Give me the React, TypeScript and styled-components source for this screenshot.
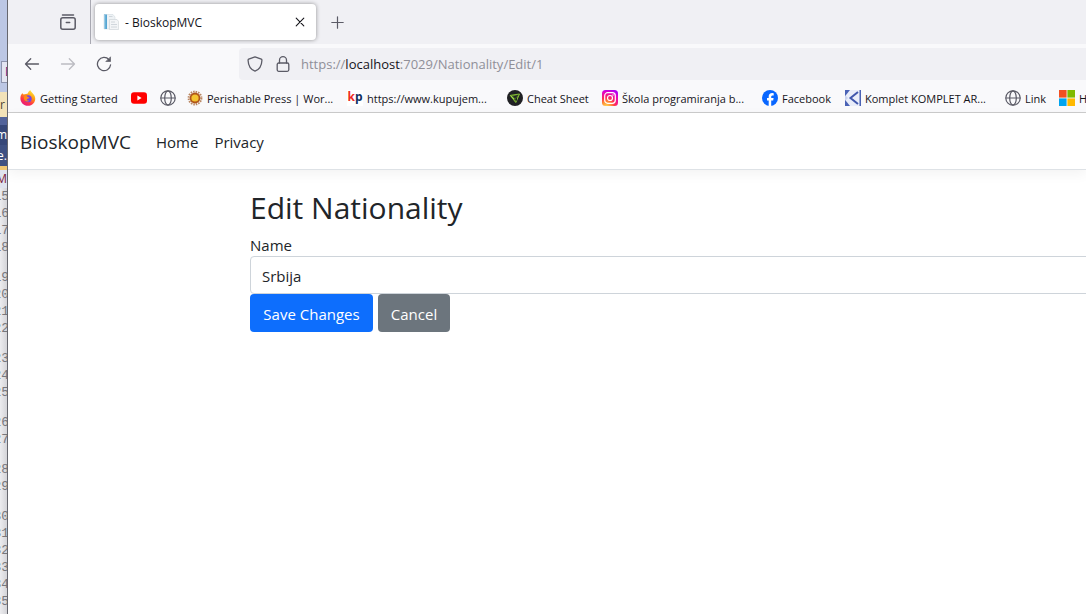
import React from "react";
import styled, { createGlobalStyle } from "styled-components";

const GlobalStyle = createGlobalStyle`
  *, *::before, *::after { box-sizing: border-box; }
  body {
    margin: 0;
    overflow: hidden;
    background: #fff;
    color: #212529;
    font-family: "Open Sans", "Noto Sans", sans-serif;
  }
  button, input { font: inherit; color: inherit; }
  button { border: 0; padding: 0; background: none; }
  a { color: inherit; text-decoration: none; }
  svg { display: block; flex: none; }
`;

const Desktop = styled.div`
  display: flex;
  height: 100vh;
  overflow: hidden;
`;

/* ---------- Editor window behind the browser ---------- */

const Editor = styled.aside`
  flex: none;
  width: 8px;
  overflow: hidden;
  background: linear-gradient(90deg, #ececef, #d4d4d8);
  border-right: 1px solid #66676e;
  font-size: 12px;
  line-height: 16px;
  white-space: pre;
`;

const EditorBand = styled.div<{ $h: number; $bg: string; $fg?: string; $start?: boolean }>`
  display: flex;
  align-items: center;
  justify-content: ${(p) => (p.$start ? "flex-start" : "flex-end")};
  height: ${(p) => p.$h}px;
  background: ${(p) => p.$bg};
  color: ${(p) => p.$fg ?? "#1e1e1e"};
`;

const EditorField = styled.div`
  height: 22px;
  margin-left: 1px;
  padding-left: 3px;
  border: 1px solid #8d94ad;
  border-right: 0;
  background: #e3e5f1;
  box-shadow: 0 0 0 10px #bcc7e4;
  color: #68217a;
  line-height: 20px;
`;

const LineNumber = styled.div<{ $wrapped?: boolean }>`
  display: flex;
  justify-content: flex-end;
  height: ${(p) => (p.$wrapped ? 30 : 17)}px;
  margin-right: -2px;
  color: #77777c;
  font: 13px/18px "Liberation Mono", monospace;
`;

/* ---------- Browser chrome ---------- */

const Browser = styled.div`
  display: flex;
  flex: 1;
  flex-direction: column;
  min-width: 0;
  overflow: hidden;
`;

const TabStrip = styled.div`
  display: flex;
  flex: none;
  align-items: center;
  height: 44px;
  background: #f0f0f4;
  color: #5b5b66;
`;

const RecentButton = styled.button`
  display: flex;
  align-items: center;
  justify-content: flex-end;
  width: 83px;
  height: 44px;
  padding-right: 14px;
  border-right: 1px solid #a9a9b2;
`;

const Tab = styled.div`
  display: flex;
  align-items: center;
  width: 221px;
  height: 36px;
  margin-left: 4px;
  padding: 0 11px 0 8px;
  border-radius: 4px;
  background: #fff;
  box-shadow: 0 0 4px rgba(0, 0, 0, 0.4);
  color: #15141a;
  font-size: 12px;
`;

const TabTitle = styled.span`
  flex: 1;
  padding-left: 6px;
`;

const NewTabButton = styled.button`
  margin-left: 15px;
`;

const Toolbar = styled.div`
  display: flex;
  flex: none;
  align-items: center;
  height: 40px;
  padding-left: 16px;
  background: #f9f9fb;
  color: #5b5b66;
`;

const NavButton = styled.button<{ $dim?: boolean }>`
  width: 36px;
  color: ${(p) => (p.$dim ? "#bcbcc2" : "#5b5b66")};
`;

const AddressBar = styled.div`
  display: flex;
  flex: 1;
  align-items: center;
  gap: 12px;
  height: 32px;
  margin-left: 107px;
  padding-left: 8px;
  border-radius: 4px 0 0 4px;
  background: #f0f0f4;
`;

const Url = styled.span`
  margin-left: -2px;
  color: #8f8f98;
  font-size: 13px;
  white-space: nowrap;

  b { color: #15141a; font-weight: 400; }
`;

const Bookmarks = styled.nav`
  display: flex;
  flex: none;
  align-items: center;
  height: 29px;
  padding-left: 12px;
  border-bottom: 1px solid #ccc;
  background: #f9f9fb;
  overflow: hidden;
`;

const Bookmark = styled.a<{ $w: number }>`
  display: flex;
  flex: none;
  align-items: center;
  gap: 4px;
  width: ${(p) => p.$w}px;
  color: #15141a;
  font-size: 11px;
  white-space: nowrap;
`;

/* ---------- Page ---------- */

const Navbar = styled.header`
  display: flex;
  flex: none;
  align-items: center;
  height: 57px;
  padding: 2px 0 0 12px;
  border-bottom: 1px solid #dee2e6;
  box-shadow: 0 4px 12px rgba(0, 0, 0, 0.05);
`;

const Brand = styled.a`
  margin-right: 17px;
  font-size: 19px;
`;

const NavLink = styled.a`
  padding: 8px;
  font-size: 15px;
`;

const Main = styled.main`
  padding: 19px 0 0 242px;
  font-size: 15px;
  line-height: 24px;
`;

const Title = styled.h1`
  margin: 0 0 7px;
  font-size: 30px;
  font-weight: 400;
  line-height: 38px;
`;

const Label = styled.label`
  display: block;
  line-height: 22px;
`;

const TextField = styled.input`
  display: block;
  width: calc(100% + 12px);
  height: 38px;
  padding: 2px 11px 0;
  border: 1px solid #ced4da;
  border-radius: 4px;
  background: #fff;
`;

const Actions = styled.div`
  display: flex;
  gap: 5px;
`;

const Button = styled.button<{ $bg: string; $w: number }>`
  width: ${(p) => p.$w}px;
  height: 38px;
  padding-top: 2px;
  border-radius: 4px;
  background: ${(p) => p.$bg};
  color: #fff;
`;

/* ---------- Icons ---------- */

const stroke = {
  fill: "none",
  stroke: "currentColor",
  strokeWidth: 1.3,
  strokeLinecap: "round" as const,
  strokeLinejoin: "round" as const,
};

const RecentIcon = () => (
  <svg width="16" height="16" viewBox="0 0 16 16" {...stroke} strokeWidth="1.5" aria-hidden>
    <path d="M2.5 1H13.5" />
    <rect x=".8" y="3.800" width="14.400" height="11.400" rx="2" />
    <path d="M6.300 8.500H9.700" />
  </svg>
);

const DocIcon = () => (
  <svg width="16" height="16" viewBox="0 0 16 16" aria-hidden>
    <path d="M1 .5H10L12 3V15H1Z" fill="#eef2f5" stroke="#d3dbe1" strokeWidth=".6" />
    <path d="M1 .5H4V15H1Z" fill="#56a5d2" />
    <path d="M1 .5H2.300V15H1Z" fill="#9bcbe5" />
    <path d="M6.500 5.500H14L15.600 7.500V15.500H6.500Z" fill="#f3f5f7" stroke="#d0d6da" strokeWidth=".7" />
    <path d="M8 8H12M8 10.500H14M8 13H14M6 2.500H9.500" stroke="#c6ced4" strokeWidth=".8" />
  </svg>
);

const CloseIcon = () => (
  <svg width="10" height="10" viewBox="0 0 10 10" {...stroke} strokeWidth="1.1" aria-hidden>
    <path d="M1.200 1.200 8.800 8.800M8.800 1.200 1.200 8.800" />
  </svg>
);

const PlusIcon = () => (
  <svg width="13" height="13" viewBox="0 0 13 13" {...stroke} strokeWidth="1.200" aria-hidden>
    <path d="M6.500 .8V12.200M.8 6.500H12.200" />
  </svg>
);

const ArrowIcon = ({ right = false }: { right?: boolean }) => (
  <svg width="16" height="16" viewBox="0 0 16 16" {...stroke} aria-hidden>
    <path d={right ? "M1.500 8H14.500M9.300 2.800 14.500 8 9.300 13.200" : "M14.500 8H1.500M6.700 2.800 1.500 8 6.700 13.200"} />
  </svg>
);

const ReloadIcon = () => (
  <svg width="16" height="16" viewBox="0 0 16 16" {...stroke} aria-hidden>
    <path d="M13 3.700A6.600 6.600 0 1 0 14.600 8.800" />
    <path d="M14.500 1.200V5.500H10.200Z" fill="currentColor" strokeWidth=".7" />
  </svg>
);

const ShieldIcon = () => (
  <svg width="16" height="16" viewBox="0 0 16 16" {...stroke} aria-hidden>
    <path d="M8 .8 14.300 3.200Q15 3.500 14.900 4.500C14.700 9.500 12.500 13.500 8 15.200C3.500 13.500 1.300 9.500 1.100 4.500Q1 3.500 1.700 3.200Z" />
  </svg>
);

const LockIcon = () => (
  <svg width="16" height="16" viewBox="0 0 16 16" {...stroke} aria-hidden>
    <rect x="2.200" y="7" width="11.600" height="8.300" rx="1.500" />
    <path d="M4.500 7V4.200A3.500 3.500 0 0 1 11.500 4.200V7" />
  </svg>
);

const FirefoxIcon = () => (
  <svg width="16" height="16" viewBox="0 0 16 16" aria-hidden>
    <defs>
      <linearGradient id="fx" x1=".8" y1="0" x2=".25" y2="1">
        <stop offset="0" stopColor="#fff044" />
        <stop offset=".4" stopColor="#ff980e" />
        <stop offset=".7" stopColor="#ff3647" />
        <stop offset="1" stopColor="#e31587" />
      </linearGradient>
    </defs>
    <path d="M2.300 3.200 3.600 4.500 6 4 7.800 3.600C8.200 2 9.200.8 10.300 0C10.500 2 14.700 4 15.200 8C15.600 12.500 12.200 15.800 8 15.800C3.700 15.800.4 12.600.4 8.500C.4 6 1.200 4.300 2.300 3.200Z" fill="url(#fx)" />
    <circle cx="8.200" cy="8.700" r="3.500" fill="#7542e5" />
    <path d="M4 6.300C5.500 5.300 7 5.900 7.800 7L9.500 7.400C9 8.700 7.600 8.300 7 9.200C6.500 10.200 7.600 11 9.200 10.400C8 12.500 4.500 11.500 4 9Z" fill="#ff8a16" />
  </svg>
);

const YouTubeIcon = () => (
  <svg width="16" height="16" viewBox="0 0 16 16" aria-hidden>
    <rect y="2.300" width="16" height="11.400" rx="3" fill="#f00" />
    <path d="M6.400 5.500 10.600 8 6.400 10.500Z" fill="#fff" />
  </svg>
);

const GlobeIcon = () => (
  <svg width="16" height="16" viewBox="0 0 16 16" {...stroke} stroke="#5b5b66" strokeWidth="1.200" aria-hidden>
    <circle cx="8" cy="8" r="7.200" />
    <ellipse cx="8" cy="8" rx="3.300" ry="7.200" />
    <path d="M1 8H15" />
  </svg>
);

const SunIcon = () => (
  <svg width="16" height="16" viewBox="0 0 16 16" aria-hidden>
    <circle cx="8" cy="8" r="6.400" fill="none" stroke="#b98660" strokeWidth="2" strokeDasharray="1.500 1" />
    <circle cx="8" cy="8" r="5.400" fill="#b0561a" />
    <circle cx="8" cy="8" r="3.600" fill="#f4c430" />
  </svg>
);

const KpMark = styled.span`
  display: flex;
  justify-content: center;
  width: 16px;
  height: 16px;
  background: #fff;
  color: #12305e;
  font: 700 12px/14px "Open Sans", sans-serif;

  i { color: #ee2a24; font-style: normal; }
`;

const CheatIcon = () => (
  <svg width="16" height="16" viewBox="0 0 16 16" aria-hidden>
    <circle cx="8" cy="8" r="8" fill="#202124" />
    <path d="M3.200 5.400 12.500 4 8.800 12.500Z" fill="#4f7526" stroke="#86bd36" strokeWidth="1" />
    <path d="M3.500 5.500 7 9" stroke="#a0d650" fill="none" />
    <path d="M6 6.500 11.500 4.800 8 8.200ZM8 9.200 10 7V11Z" fill="#202124" />
  </svg>
);

const InstagramIcon = () => (
  <svg width="16" height="16" viewBox="0 0 16 16" aria-hidden>
    <defs>
      <radialGradient id="ig" cx=".27" cy="1.050" r="1.100">
        <stop offset="0" stopColor="#ffdd55" />
        <stop offset=".3" stopColor="#ff8a35" />
        <stop offset=".5" stopColor="#ff2d55" />
        <stop offset=".85" stopColor="#e300c8" />
        <stop offset="1" stopColor="#b100f0" />
      </radialGradient>
    </defs>
    <rect width="16" height="16" rx="3.500" fill="url(#ig)" />
    <rect x="2.700" y="2.700" width="10.600" height="10.600" rx="3" fill="none" stroke="#fff" strokeWidth="1.200" />
    <circle cx="8" cy="8" r="2.500" fill="none" stroke="#fff" strokeWidth="1.200" />
    <circle cx="11" cy="5" r=".7" fill="#fff" />
  </svg>
);

const FacebookIcon = () => (
  <svg width="16" height="16" viewBox="0 0 16 16" aria-hidden>
    <circle cx="8" cy="8" r="8" fill="#0866ff" />
    <path d="M6.700 15.900V10.400H5V8H6.700V6.800C6.700 4.200 7.900 3 10.300 3Q11.200 3 11.700 3.200V5.400H10.700C9.600 5.400 9.200 5.900 9.200 6.900V8H11.600L11.200 10.400H9.200V15.900Z" fill="#fff" />
  </svg>
);

const KompletIcon = () => (
  <svg width="16" height="16" viewBox="0 0 16 16" aria-hidden>
    <rect width="16" height="16" fill="#4a62b5" />
    <path d="M5 0H14.500V16H5L1 11V5Z" fill="#e9edf9" />
    <path d="M0 5 3 8 0 11Z" fill="#c9d2ee" />
    <path d="M13 2 5.500 8 13 14" fill="none" stroke="#4057ad" strokeWidth="2" />
  </svg>
);

const MicrosoftIcon = () => (
  <svg width="16" height="16" viewBox="0 0 16 16" aria-hidden>
    <path d="M0 0H7.600V7.600H0Z" fill="#f25022" />
    <path d="M8.400 0H16V7.600H8.400Z" fill="#7fba00" />
    <path d="M0 8.400H7.600V16H0Z" fill="#00a4ef" />
    <path d="M8.400 8.400H16V16H8.400Z" fill="#ffb900" />
  </svg>
);

const bookmarks: { icon: React.ReactNode; text?: string; name?: string; width: number }[] = [
  { icon: <FirefoxIcon />, text: "Getting Started", width: 111 },
  { icon: <YouTubeIcon />, name: "YouTube", width: 29 },
  { icon: <GlobeIcon />, name: "Website", width: 27 },
  { icon: <SunIcon />, text: "Perishable Press | Wor...", width: 160 },
  { icon: <KpMark><i>k</i>p</KpMark>, text: "https://www.kupujem...", width: 160 },
  { icon: <CheatIcon />, text: "Cheat Sheet", width: 95 },
  { icon: <InstagramIcon />, text: "Škola programiranja b...", width: 160 },
  { icon: <FacebookIcon />, text: "Facebook", width: 83 },
  { icon: <KompletIcon />, text: "Komplet KOMPLET AR...", width: 160 },
  { icon: <GlobeIcon />, text: "Link", width: 54 },
  { icon: <MicrosoftIcon />, text: "H", width: 80 },
];

const wrappedLines = [18, 22, 25, 27, 29];
const lineNumbers = Array.from({ length: 21 }, (_, i) => i + 15);

export default function App() {
  return (
    <Desktop>
      <GlobalStyle />
      <Editor aria-hidden>
        <EditorBand $h={61} $bg="#bcc7e4" />
        <EditorField>D</EditorField>
        <EditorBand $h={9} $bg="#bcc7e4" />
        <EditorBand $h={25} $bg="#f2e2b8" $fg="#4b4432" $start>r h</EditorBand>
        <EditorBand $h={8} $bg="#52639a" />
        <EditorBand $h={20} $bg="#364778" $fg="#fff">m</EditorBand>
        <EditorBand $h={21} $bg="#3e5082" $fg="#fff">e.</EditorBand>
        <EditorBand $h={4} $bg="#eec572" />
        <EditorBand $h={18} $bg="#dfe3ee" $fg="#7b2340">M</EditorBand>
        {lineNumbers.map((n) => (
          <LineNumber key={n} $wrapped={wrappedLines.includes(n)}>{n}</LineNumber>
        ))}
      </Editor>

      <Browser>
        <TabStrip>
          <RecentButton aria-label="Recent browsing"><RecentIcon /></RecentButton>
          <Tab>
            <DocIcon />
            <TabTitle>- BioskopMVC</TabTitle>
            <button aria-label="Close tab"><CloseIcon /></button>
          </Tab>
          <NewTabButton aria-label="New tab"><PlusIcon /></NewTabButton>
        </TabStrip>
        <Toolbar>
          <NavButton aria-label="Back"><ArrowIcon /></NavButton>
          <NavButton aria-label="Forward" $dim><ArrowIcon right /></NavButton>
          <NavButton aria-label="Reload"><ReloadIcon /></NavButton>
          <AddressBar>
            <ShieldIcon />
            <LockIcon />
            <Url>https://<b>localhost</b>:7029/Nationality/Edit/1</Url>
          </AddressBar>
        </Toolbar>
        <Bookmarks>
          {bookmarks.map((b, i) => (
            <Bookmark key={i} href="#" $w={b.width} aria-label={b.name}>
              {b.icon}
              {b.text}
            </Bookmark>
          ))}
        </Bookmarks>

        <Navbar>
          <Brand href="#">BioskopMVC</Brand>
          <NavLink href="#">Home</NavLink>
          <NavLink href="#">Privacy</NavLink>
        </Navbar>
        <Main>
          <Title>Edit Nationality</Title>
          <Label htmlFor="name">Name</Label>
          <TextField id="name" defaultValue="Srbija" />
          <Actions>
            <Button $bg="#0d6efd" $w={123}>Save Changes</Button>
            <Button $bg="#6c757d" $w={72}>Cancel</Button>
          </Actions>
        </Main>
      </Browser>
    </Desktop>
  );
}
